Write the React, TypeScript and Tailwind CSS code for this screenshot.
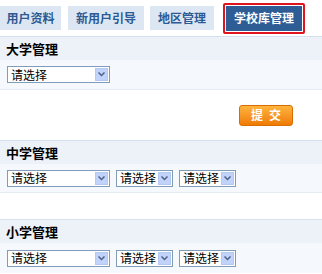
function Select({ width }: { width: string }) {
  return (
    <div className={`${width} shrink-0 h-[17px] flex items-center justify-between border border-[#7f9db9] bg-white pl-[3px] pr-[1px]`}>
      <span className="text-[12px] leading-none text-black whitespace-nowrap">请选择</span>
      <span className="shrink-0 ml-[2px] w-[13px] h-[13px] flex items-center justify-center bg-[#c1d3fb] border border-[#b4c8f0]">
        <svg width="7" height="5" viewBox="0 0 7 5">
          <path d="M0.5 0.5 L3.5 3.5 L6.5 0.5" stroke="#4d6185" strokeWidth="1.5" fill="none" />
        </svg>
      </span>
    </div>
  );
}

function SectionHead({ title }: { title: string }) {
  return (
    <div className="h-[24px] flex items-center px-[6px] bg-[#edf2f9] border-t border-[#d6e1ef]">
      <h2 className="text-[13px] font-bold text-black">{title}</h2>
    </div>
  );
}

export default function App() {
  return (
    <div className="w-[322px] h-[274px] bg-white overflow-hidden font-['SimSun','Noto_Sans_CJK_SC',sans-serif]">
      {/* Tabs */}
      <div className="h-[36px] flex items-center gap-[6px] px-0">
        <div className="w-[61px] h-[24px] flex items-center justify-center bg-[#dde7f3] text-[12px] font-bold text-[#2b5a94]">用户资料</div>
        <div className="w-[76px] h-[24px] flex items-center justify-center bg-[#dde7f3] text-[12px] font-bold text-[#2b5a94] ml-[1px]">新用户引导</div>
        <div className="w-[64px] h-[24px] flex items-center justify-center bg-[#dde7f3] text-[12px] font-bold text-[#2b5a94]">地区管理</div>
        <div className="ml-[3px] border-2 border-[#e0141e] rounded-[2px] p-[1px]">
          <div className="w-[76px] h-[25px] flex items-center justify-center bg-[#2e5d96] text-[12px] font-bold text-white">学校库管理</div>
        </div>
      </div>

      <SectionHead title="大学管理" />
      <div className="h-[30px] flex items-center px-[7px] bg-[#f5f8fc] border-b border-[#e4ebf4]">
        <Select width="w-[103px]" />
      </div>

      <div className="h-[50px] flex items-center justify-end pr-[29px]">
        <button className="w-[54px] h-[21px] rounded-[3px] border border-[#d86d00] bg-gradient-to-b from-[#ffb43c] to-[#ee7a00] text-[12px] font-bold text-white tracking-[6px] pl-[6px]">
          提交
        </button>
      </div>

      <SectionHead title="中学管理" />
      <div className="h-[29px] flex items-center gap-[6px] px-[7px] bg-[#f5f8fc] border-b border-[#e4ebf4]">
        <Select width="w-[103px]" />
        <Select width="w-[57px]" />
        <Select width="w-[57px]" />
      </div>

      <div className="h-[26px]" />

      <SectionHead title="小学管理" />
      <div className="h-[30px] flex items-center gap-[6px] px-[7px] bg-[#f5f8fc]">
        <Select width="w-[103px]" />
        <Select width="w-[57px]" />
        <Select width="w-[57px]" />
      </div>
    </div>
  );
}
